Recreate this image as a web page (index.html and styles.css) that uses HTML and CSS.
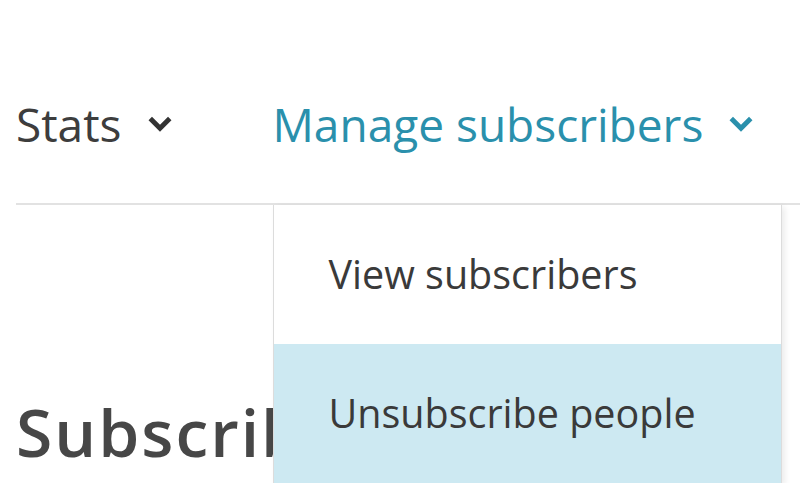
FILE: index.html
```html
<!DOCTYPE html>
<html lang="en">
<head>
    <meta charset="UTF-8">
    <meta name="viewport" content="width=device-width, initial-scale=1.0">
    <title>Subscribers</title>
    <link rel="stylesheet" href="styles.css">
</head>
<body>
    <div class="page">
        <nav class="tabs">
            <div class="tab">
                <span>Stats</span>
                <svg class="chevron" viewBox="0 0 24 16"><path d="M3 3 L12 12 L21 3"/></svg>
            </div>
            <div class="tab active">
                <span>Manage subscribers</span>
                <svg class="chevron" viewBox="0 0 24 16"><path d="M3 3 L12 12 L21 3"/></svg>
                <ul class="menu">
                    <li>View subscribers</li>
                    <li class="hover">Unsubscribe people</li>
                </ul>
            </div>
        </nav>
        <h1>Subscribers</h1>
    </div>
</body>
</html>
```

FILE: styles.css
```css
html, body {
    height: 100%;
}
body {
    margin: 0;
    padding: 0;
    background: #fff;
    font-family: "Open Sans", Arial, sans-serif;
    color: #3d3d3d;
}
.page {
    height: 100%;
    padding-left: 16px;
    overflow: hidden;
}
.tabs {
    display: flex;
    gap: 100px;
    padding-top: 94px;
    height: 205px;
    border-bottom: 2px solid #e2e2e2;
    box-sizing: border-box;
}
.tab {
    position: relative;
    display: flex;
    align-items: flex-start;
    gap: 25px;
    font-size: 46px;
    line-height: 60px;
    height: 60px;
}
.tab.active {
    color: #2a90ac;
}
.chevron {
    width: 26px;
    height: 18px;
    margin-top: 21px;
    fill: none;
    stroke: currentColor;
    stroke-width: 4.5;
}
.tab:first-child .chevron {
    color: #333;
}
.menu {
    position: absolute;
    top: 111px;
    left: 0;
    width: 507px;
    margin: 0;
    padding: 0;
    list-style: none;
    background: #fff;
    border: 1px solid #dcdcdc;
    border-top: none;
    box-shadow: 3px 2px 6px rgba(0, 0, 0, 0.08);
    color: #3a3a3a;
    font-size: 39.5px;
    line-height: 48px;
}
.menu li {
    padding: 45px 0 46px 55px;
}
.menu li.hover {
    background: #cde9f2;
}
h1 {
    margin: 186px 0 0;
    font-size: 66px;
    font-weight: 600;
    letter-spacing: 2px;
    line-height: 80px;
    color: #474747;
}
```
